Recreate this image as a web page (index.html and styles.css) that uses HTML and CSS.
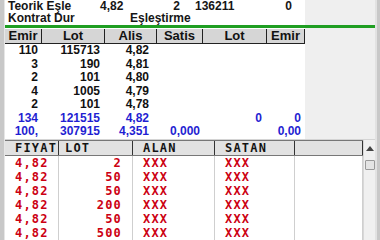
FILE: index.html
```html
<!DOCTYPE html>
<html>
<head>
  <meta charset="utf-8">
  <link rel="stylesheet" href="styles.css">
</head>
<body>
  <div class="window">
    <div class="top">
      <div class="info">
        <div class="info-main">
          <div class="info-row row-a">
            <span>Teorik Eşle</span>
            <span>4,82</span>
            <span class="num">2</span>
            <span class="lot">136211</span>
            <span class="num">0</span>
          </div>
          <div class="info-row row-b">
            <span>Kontrat Dur</span>
            <span>Eşleştirme</span>
          </div>
        </div>
        <div class="side"></div>
      </div>
      <div class="rule"></div>
      <div class="book">
        <div class="book-main">
          <div class="depth head">
            <span>Emir</span><span>Lot</span><span>Alis</span><span>Satis</span><span>Lot</span><span>Emir</span>
          </div>
          <div class="depth"><span>110</span><span>115713</span><span>4,82</span><span></span><span></span><span></span></div>
          <div class="depth"><span>3</span><span>190</span><span>4,81</span><span></span><span></span><span></span></div>
          <div class="depth"><span>2</span><span>101</span><span>4,80</span><span></span><span></span><span></span></div>
          <div class="depth"><span>4</span><span>1005</span><span>4,79</span><span></span><span></span><span></span></div>
          <div class="depth"><span>2</span><span>101</span><span>4,78</span><span></span><span></span><span></span></div>
          <div class="depth total"><span>134</span><span>121515</span><span>4,82</span><span></span><span>0</span><span>0</span></div>
          <div class="depth total"><span>100,</span><span>307915</span><span>4,351</span><span>0,000</span><span></span><span>0,00</span></div>
        </div>
        <div class="side"></div>
      </div>
    </div>
    <div class="gap"></div>
    <div class="trades">
      <div class="trade-table">
        <div class="trade head">
          <span>FIYAT</span><span class="lot-head">LOT</span><span>ALAN</span><span>SATAN</span><span></span>
        </div>
        <div class="trade"><span>4,82</span><span class="num">2</span><span>XXX</span><span>XXX</span><span></span></div>
        <div class="trade"><span>4,82</span><span class="num">50</span><span>XXX</span><span>XXX</span><span></span></div>
        <div class="trade"><span>4,82</span><span class="num">50</span><span>XXX</span><span>XXX</span><span></span></div>
        <div class="trade"><span>4,82</span><span class="num">200</span><span>XXX</span><span>XXX</span><span></span></div>
        <div class="trade"><span>4,82</span><span class="num">50</span><span>XXX</span><span>XXX</span><span></span></div>
        <div class="trade"><span>4,82</span><span class="num">500</span><span>XXX</span><span>XXX</span><span></span></div>
      </div>
      <div class="scroll">
        <span class="arrow"></span>
        <span class="thumb"></span>
      </div>
    </div>
  </div>
</body>
</html>
```

FILE: styles.css
```css
body {
  margin: 0;
  width: 380px;
  height: 240px;
  overflow: hidden;
  background: #c8c8c8;
  font-family: 'Liberation Sans', Arial, sans-serif;
}
.window {
  margin-left: 4px;
  width: 370px;
  border-left: 1px solid #e6e6e6;
  border-right: 2px solid #e2e2e2;
}
.info,
.book {
  display: flex;
}
.info-main,
.book-main {
  width: 300px;
  background: white;
}
.side {
  flex: 1;
  background: #efefef;
}
.info-main {
  height: 25px;
}
.info-row {
  display: grid;
  height: 12px;
  line-height: 12px;
  font-size: 12px;
  font-weight: bold;
  color: #161616;
  white-space: nowrap;
}
.row-a {
  grid-template-columns: 95px 50px 30px 80px 32px;
}
.row-b {
  grid-template-columns: 125px 100px;
}
.info-row span:first-child {
  padding-left: 3px;
}
.info-row .num {
  text-align: right;
}
.info-row .lot {
  padding-left: 15px;
}
.rule {
  height: 3px;
  background: #1f9e22;
}
.book-main {
  padding-top: 1px;
}
.depth {
  display: grid;
  grid-template-columns: 37px 63px 52px 46px 64px 38px;
  height: 13.5px;
  line-height: 13.5px;
  font-size: 12px;
  font-weight: bold;
  color: #111;
  text-align: right;
}
.depth span {
  padding-right: 4px;
  white-space: nowrap;
}
.depth span:nth-child(2) {
  padding-right: 5px;
}
.depth span:nth-child(3) {
  padding-right: 8px;
}
.depth span:nth-child(4) {
  padding-right: 3px;
}
.depth span:nth-child(5) {
  padding-right: 5px;
}
.depth.head {
  height: 14px;
  line-height: 14px;
  font-size: 13px;
  text-align: center;
  background: #d6d6d6;
  border-bottom: 1px solid #222;
}
.depth.head span {
  padding: 0;
  border-right: 1px solid #222;
}
.depth.total {
  color: #1f1fd2;
}
.gap {
  height: 1.5px;
  background: #d4d4d4;
}
.trades {
  display: flex;
  height: 100px;
}
.trade-table {
  width: 358px;
  background: white;
}
.trade {
  display: grid;
  grid-template-columns: 54px 74px 82px 80px 68px;
  height: 14px;
  line-height: 14px;
  font-family: 'DejaVu Sans Mono', monospace;
  font-size: 12px;
  font-weight: bold;
  letter-spacing: 1.2px;
  color: #cc0012;
}
.trade span {
  padding-left: 10px;
  border-right: 1px solid #cfcfcf;
  white-space: nowrap;
}
.trade .num {
  padding-left: 0;
  padding-right: 10px;
  text-align: right;
}
.trade.head {
  color: #141414;
  background: #e2e2e2;
  border-top: 1px solid #777;
  border-bottom: 1px solid #777;
}
.trade.head span {
  border-right: 1px solid #333;
}
.trade.head .lot-head {
  padding-left: 6px;
}
.scroll {
  flex: 1;
  display: flex;
  flex-direction: column;
  align-items: center;
  background: #f0f0f0;
  border-left: 1px solid #d8d8d8;
}
.arrow {
  margin-top: 6px;
  width: 0;
  height: 0;
  border-left: 4px solid transparent;
  border-right: 4px solid transparent;
  border-bottom: 5px solid #444;
}
.thumb {
  margin-top: 9px;
  width: 8px;
  height: 8px;
  background: #e4e4e4;
  border: 1px solid #999;
  border-radius: 1px;
}
```
